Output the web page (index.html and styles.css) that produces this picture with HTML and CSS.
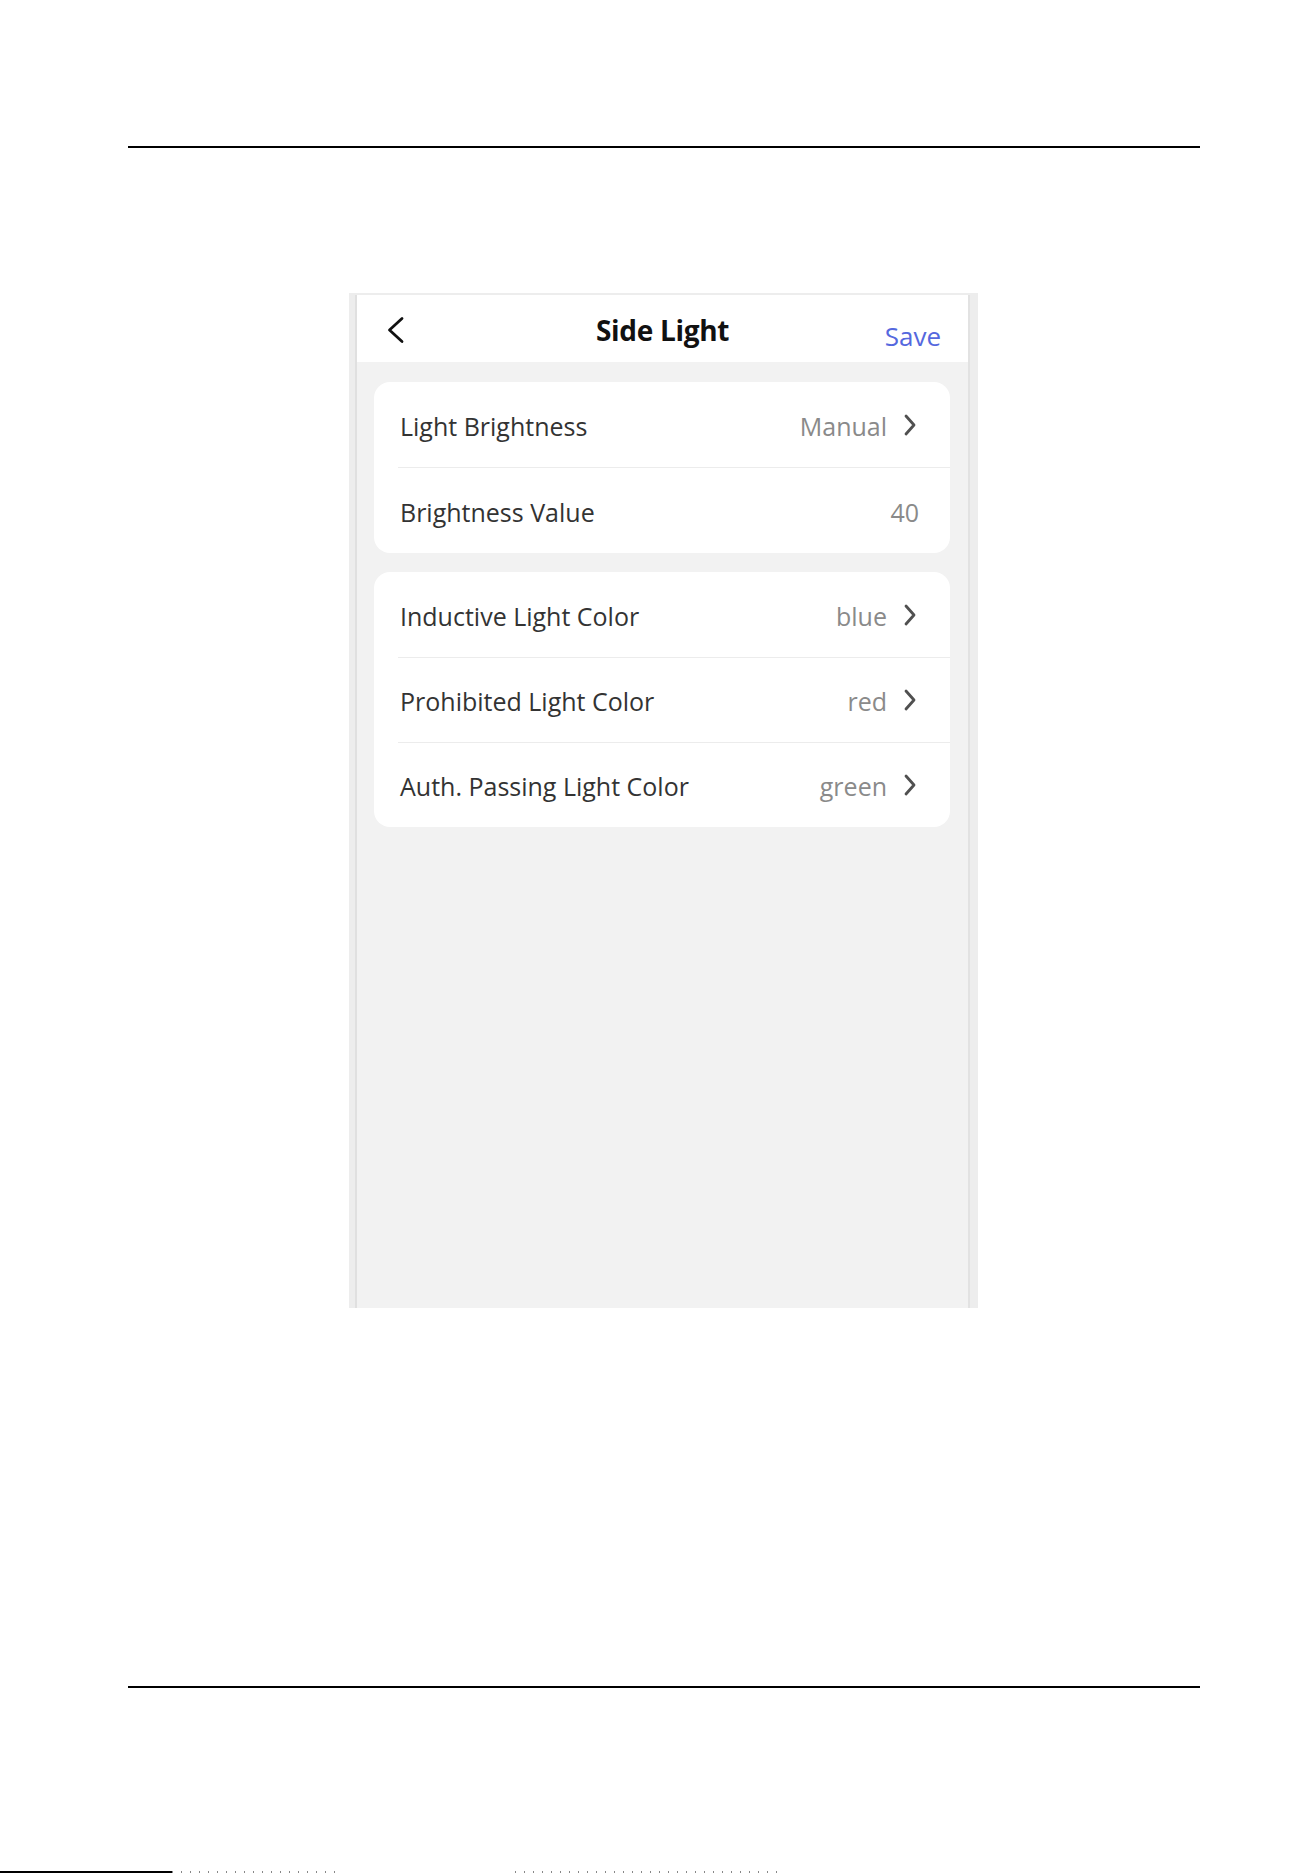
FILE: index.html
```html
<!DOCTYPE html>
<html lang="en">
<head>
<meta charset="utf-8">
<title>Side Light</title>
<link rel="stylesheet" href="styles.css">
</head>
<body>
<div class="page">
  <div class="rule rule-top"></div>
  <div class="phone">
    <div class="screen">
      <div class="nav">
        <div class="nav-left">
          <svg class="back" width="19" height="28" viewBox="0 0 19 28"><path d="M16 2.5 L3.5 14 L16 25.5" fill="none" stroke="#111" stroke-width="2.8" stroke-linecap="round" stroke-linejoin="round"/></svg>
        </div>
        <div class="nav-title">Side Light</div>
        <div class="nav-right"><span class="save">Save</span></div>
      </div>

      <div class="card">
        <div class="row">
          <span class="label">Light Brightness</span>
          <span class="value">Manual</span>
          <svg class="chev" width="14" height="24" viewBox="0 0 14 24"><path d="M3 3 L11 12 L3 21" fill="none" stroke="#505050" stroke-width="2.8" stroke-linecap="round" stroke-linejoin="round"/></svg>
        </div>
        <div class="row row-plain">
          <span class="label">Brightness Value</span>
          <span class="value">40</span>
        </div>
      </div>

      <div class="card card-three">
        <div class="row">
          <span class="label">Inductive Light Color</span>
          <span class="value">blue</span>
          <svg class="chev" width="14" height="24" viewBox="0 0 14 24"><path d="M3 3 L11 12 L3 21" fill="none" stroke="#505050" stroke-width="2.8" stroke-linecap="round" stroke-linejoin="round"/></svg>
        </div>
        <div class="row">
          <span class="label">Prohibited Light Color</span>
          <span class="value">red</span>
          <svg class="chev" width="14" height="24" viewBox="0 0 14 24"><path d="M3 3 L11 12 L3 21" fill="none" stroke="#505050" stroke-width="2.8" stroke-linecap="round" stroke-linejoin="round"/></svg>
        </div>
        <div class="row">
          <span class="label">Auth. Passing Light Color</span>
          <span class="value">green</span>
          <svg class="chev" width="14" height="24" viewBox="0 0 14 24"><path d="M3 3 L11 12 L3 21" fill="none" stroke="#505050" stroke-width="2.8" stroke-linecap="round" stroke-linejoin="round"/></svg>
        </div>
      </div>
    </div>
  </div>
  <div class="rule rule-bottom"></div>
  <div class="footer-strip">
    <div class="strip-line"></div>
    <div class="strip-dots strip-dots-a"></div>
    <div class="strip-gap"></div>
    <div class="strip-dots strip-dots-b"></div>
  </div>
</div>
</body>
</html>
```

FILE: styles.css
```css
html, body {
  margin: 0;
  padding: 0;
  background: #ffffff;
}

.page {
  width: 1313px;
  height: 1873px;
  overflow: hidden;
  display: flex;
  flex-direction: column;
  font-family: "Open Sans", "Noto Sans", sans-serif;
}

.page > * {
  flex-shrink: 0;
}

.rule {
  height: 2px;
  background: #000;
  width: 1072px;
  margin-left: 128px;
}

.rule-top {
  margin-top: 146px;
}

.rule-bottom {
  margin-top: 378px;
}

.phone {
  margin-top: 145px;
  margin-left: 349px;
  width: 629px;
  height: 1015px;
  box-sizing: border-box;
  padding: 2px 8px 0 6px;
  background: #ededed;
  display: flex;
}

.screen {
  flex: 1;
  background: #f2f2f2;
  border-left: 2px solid #e0e0e0;
  border-right: 2px solid #e2e2e2;
  display: flex;
  flex-direction: column;
}

.nav {
  height: 67px;
  background: #ffffff;
  display: grid;
  grid-template-columns: 1fr auto 1fr;
  align-items: center;
}

.nav-left {
  padding-left: 29px;
  display: flex;
  align-items: center;
  padding-top: 2px;
}

.back {
  display: block;
}

.nav-title {
  font-weight: 700;
  font-size: 28px;
  color: #111;
  letter-spacing: -0.3px;
  padding-top: 2px;
}

.nav-right {
  display: flex;
  justify-content: flex-end;
  padding-right: 27px;
  padding-top: 14px;
}

.save {
  font-size: 26px;
  color: #5568de;
}

.card {
  margin: 20px 18px 0 17px;
  background: #ffffff;
  border-radius: 16px;
  display: flex;
  flex-direction: column;
}

.card-three {
  margin-top: 19px;
}

.row {
  height: 85px;
  margin-left: 24px;
  padding-left: 2px;
  padding-right: 33px;
  display: flex;
  align-items: center;
  border-top: 1px solid #ececec;
  box-sizing: border-box;
}

.row:first-child {
  border-top: none;
}

.row-plain {
  padding-right: 31px;
  height: 86px;
}

.label {
  flex: 1;
  font-size: 25px;
  color: #333333;
  padding-top: 2px;
}

.value {
  font-size: 25px;
  color: #8a8a8a;
  padding-top: 2px;
}

.chev {
  display: block;
  margin-left: 16px;
}

.footer-strip {
  margin-top: 183px;
  height: 2px;
  display: flex;
}

.strip-line {
  width: 172px;
  background: #000;
}

.strip-dots {
  background: repeating-linear-gradient(90deg, #888 0 1px, transparent 1px 9px);
}

.strip-dots-a {
  width: 170px;
}

.strip-gap {
  width: 173px;
}

.strip-dots-b {
  width: 270px;
}
```
